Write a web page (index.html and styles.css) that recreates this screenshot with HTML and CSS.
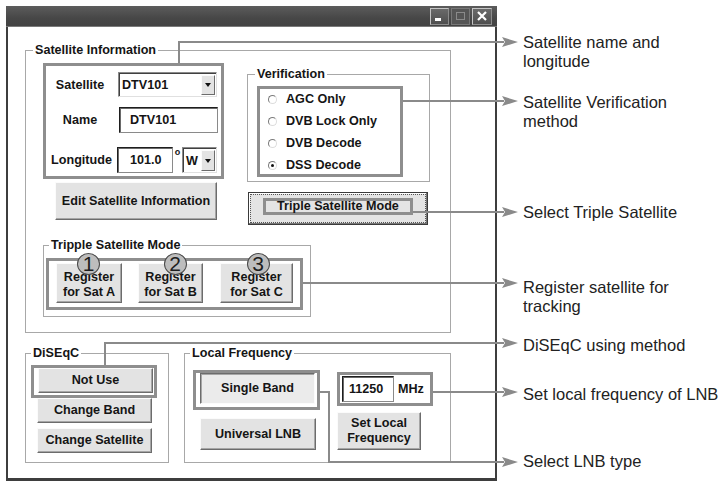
FILE: index.html
```html
<!DOCTYPE html>
<html>
<head>
<meta charset="utf-8">
<link rel="stylesheet" href="styles.css">
</head>
<body>
<div class="stage">
  <div class="window">
    <div class="titlebar">
      <span class="tb-btn tb-min"><svg width="17" height="15" viewBox="0 0 17 15"><rect x="4" y="9" width="6" height="3" fill="#fff"/></svg></span>
      <span class="tb-btn tb-max"><svg width="17" height="15" viewBox="0 0 17 15"><rect x="4.5" y="3.5" width="8" height="7" fill="none" stroke="#8a8a8a"/></svg></span>
      <span class="tb-btn tb-close"><svg width="18" height="15" viewBox="0 0 18 15"><path d="M5 3 L13 11 M13 3 L5 11" stroke="#fff" stroke-width="2.2"/></svg></span>
    </div>
    <div class="client">
      <div class="group sat-group">
        <span class="legend lg-sat">Satellite Information</span>
        <div class="sat-top">
          <div class="sat-left">
            <div class="hl sat-box">
              <div class="sat-row r1">
                <span class="lbl">Satellite</span>
                <div class="select sel-sat"><span class="sel-text">DTV101</span><span class="dd"><i></i></span></div>
              </div>
              <div class="sat-row r2">
                <span class="lbl">Name</span>
                <div class="field f-name">DTV101</div>
              </div>
              <div class="sat-row r3">
                <span class="lbl">Longitude</span>
                <div class="field f-lon">101.0</div>
                <span class="deg">o</span>
                <div class="select sel-w"><span class="sel-text">W</span><span class="dd"><i></i></span></div>
              </div>
            </div>
            <button class="btn edit-btn">Edit Satellite Information</button>
          </div>
          <div class="sat-right">
            <div class="group verif">
              <span class="legend lg-verif">Verification</span>
              <div class="hl verif-box">
                <div class="radio"><span class="rb"></span>AGC Only</div>
                <div class="radio"><span class="rb"></span>DVB Lock Only</div>
                <div class="radio"><span class="rb"></span>DVB Decode</div>
                <div class="radio"><span class="rb on"></span>DSS Decode</div>
              </div>
            </div>
            <div class="triple-btn">
              <div class="focus">
                <div class="hl triple-hl">Triple Satellite Mode</div>
              </div>
            </div>
          </div>
        </div>
        <div class="group tripple">
          <span class="legend lg-tripple">Tripple Satellite Mode</span>
          <div class="hl reg-box">
            <button class="btn reg reg-a">Register<br>for Sat A<span class="badge b1">1</span></button>
            <button class="btn reg reg-b">Register<br>for Sat B<span class="badge b2">2</span></button>
            <button class="btn reg reg-c">Register<br>for Sat C<span class="badge b3">3</span></button>
          </div>
        </div>
      </div>
      <div class="bottom-row">
        <div class="group diseqc">
          <span class="legend lg-diseqc">DiSEqC</span>
          <div class="hl notuse-box"><button class="btn d-btn notuse">Not Use</button></div>
          <button class="btn d-btn d-band">Change Band</button>
          <button class="btn d-btn d-sat">Change Satellite</button>
        </div>
        <div class="group lf">
          <span class="legend lg-lf">Local Frequency</span>
          <div class="lf-left">
            <div class="hl sb-box"><button class="btn pressed sb">Single Band</button></div>
            <button class="btn ulnb">Universal LNB</button>
          </div>
          <div class="lf-right">
            <div class="hl mhz-box"><div class="field f-mhz">11250</div><span class="mhz">MHz</span></div>
            <button class="btn setlf">Set Local<br>Frequency</button>
          </div>
        </div>
      </div>
    </div>
  </div>

  <svg class="callouts" width="720" height="481" viewBox="0 0 720 481">
    <g fill="none" stroke="#8a8a8a" stroke-width="2">
      <path d="M179 63 V42 H504"/>
      <path d="M403 101 H504"/>
      <path d="M413 212 H504"/>
      <path d="M303 283 H504"/>
      <path d="M105 365 V343 H504"/>
      <path d="M433 392 H504"/>
      <path d="M320 392 H329 V462 H504"/>
    </g>
    <g fill="#8a8a8a">
      <polygon points="502,37 518,42 502,47 505,42"/>
      <polygon points="502,96 518,101 502,106 505,101"/>
      <polygon points="502,207 518,212 502,217 505,212"/>
      <polygon points="502,278 518,283 502,288 505,283"/>
      <polygon points="502,338 518,343 502,348 505,343"/>
      <polygon points="502,387 518,392 502,397 505,392"/>
      <polygon points="502,457 518,462 502,467 505,462"/>
    </g>
  </svg>

  <div class="note n1">Satellite name and<br>longitude</div>
  <div class="note n2">Satellite Verification<br>method</div>
  <div class="note n3">Select Triple Satellite</div>
  <div class="note n4">Register satellite for<br>tracking</div>
  <div class="note n5">DiSEqC using method</div>
  <div class="note n6">Set local frequency of LNB</div>
  <div class="note n7">Select LNB type</div>
</div>
</body>
</html>
```

FILE: styles.css
```css
* { box-sizing: border-box; }

body {
  margin: 0;
  background: #fff;
  font-family: "Liberation Sans", Arial, sans-serif;
}

.stage {
  position: relative;
  width: 720px;
  height: 481px;
  overflow: hidden;
}

/* ---------- window ---------- */
.window {
  margin: 6px 0 0 6px;
  width: 491px;
  border-left: 2px solid #3e3e3e;
  border-right: 2px solid #3e3e3e;
  border-bottom: 3px solid #3e3e3e;
  font: bold 12.6px/14px "Liberation Sans", Arial, sans-serif;
  color: #151515;
}

.titlebar {
  height: 21px;
  margin: 0 -2px;
  background: linear-gradient(#5c5c5c, #474747 60%, #434343);
  border-bottom: 1px solid #7a7a7a;
  display: flex;
  justify-content: flex-end;
  align-items: flex-start;
  padding: 2px 5px 0 0;
  gap: 2px;
}

.tb-btn {
  display: block;
  width: 19px;
  height: 17px;
  border: 1px solid #c4c4c4;
  border-right-color: #8c8c8c;
  border-bottom-color: #8c8c8c;
  background: linear-gradient(#6a6a6a, #4e4e4e);
}
.tb-btn svg { display: block; }
.tb-max { border-color: #777; background: #555; }
.tb-close { width: 20px; }

.client {
  height: 451px;
  background: #fff;
  overflow: hidden;
  padding-top: 23px;
}

/* ---------- generic ---------- */
.group {
  position: relative;
  border: 1px solid #a8a8a8;
}

.legend {
  position: absolute;
  top: -8px;
  left: 6px;
  padding: 0 2px;
  background: #fff;
  line-height: 15px;
  white-space: nowrap;
}
.lg-sat, .lg-verif { left: 7px; }
.lg-tripple, .lg-diseqc, .lg-lf { left: 5px; }

.hl {
  border: 3px solid #8e8e8e;
}

.btn {
  display: flex;
  align-items: center;
  justify-content: center;
  text-align: center;
  padding: 0;
  margin: 0;
  font: bold 12.6px/15px "Liberation Sans", Arial, sans-serif;
  color: #151515;
  background: #e3e3e3;
  border: 1px solid;
  border-color: #fbfbfb #6c6c6c #6c6c6c #fbfbfb;
  box-shadow: inset -1px -1px 0 #a6a6a6;
}

.btn.pressed {
  border-color: #6c6c6c #fbfbfb #fbfbfb #6c6c6c;
  box-shadow: inset 1px 1px 0 #a6a6a6;
  background: #ebebeb;
}

.field {
  display: flex;
  align-items: center;
  background: #fff;
  border: 1px solid #1e1e1e;
  border-right-color: #8a8a8a;
  border-bottom-color: #8a8a8a;
  box-shadow: inset 1px 1px 0 #6a6a6a;
  white-space: nowrap;
}

.select {
  display: flex;
  align-items: center;
  background: #fff;
  border: 1px solid #8a8a8a;
  border-right-color: #e0e0e0;
  border-bottom-color: #e0e0e0;
  box-shadow: inset 1px 1px 0 #404040;
  padding: 2px 1px 1px 2px;
}
.sel-text { flex: 1; padding-left: 1px; }
.dd {
  width: 14px;
  height: 100%;
  background: #e3e3e3;
  border: 1px solid;
  border-color: #fbfbfb #6c6c6c #6c6c6c #fbfbfb;
  display: flex;
  align-items: center;
  justify-content: center;
}
.dd i {
  display: block;
  width: 0;
  height: 0;
  border-left: 3.5px solid transparent;
  border-right: 3.5px solid transparent;
  border-top: 4px solid #111;
}

/* ---------- satellite information ---------- */
.sat-group {
  margin-left: 17px;
  width: 426px;
  height: 283px;
}

.sat-top {
  display: flex;
  align-items: flex-start;
  margin: 12px 0 0 17px;
}

.sat-left { width: 181px; }

.sat-box {
  width: 181px;
  height: 116px;
  padding-top: 6px;
}

.sat-row {
  display: flex;
  align-items: center;
}
.sat-row.r1 { height: 25px; }
.sat-row.r2 { height: 26px; margin-top: 10px; }
.sat-row.r3 { height: 26px; margin-top: 14px; }

.lbl {
  width: 68px;
  margin-right: 4px;
  text-align: center;
  white-space: nowrap;
}
.r3 .lbl { padding-left: 3px; }

.sel-sat { width: 99px; height: 25px; }
.f-name { width: 99px; height: 26px; padding-left: 10px; margin-left: 1px; }
.f-lon { width: 56px; height: 26px; padding-left: 12px; margin-left: -1px; }
.deg {
  width: 9px;
  align-self: flex-start;
  font-size: 9px;
  line-height: 9px;
  text-align: center;
  margin-top: 1px;
}
.sel-w { width: 35px; height: 26px; }

.edit-btn {
  width: 162px;
  height: 38px;
  margin: 3px 0 0 12px;
}

.sat-right {
  margin: 11px 0 0 23px;
}

.verif {
  width: 183px;
  height: 108px;
}

.verif-box {
  width: 146px;
  height: 91px;
  margin: 11px 0 0 9px;
  padding-top: 0;
}

.radio {
  display: flex;
  align-items: center;
  height: 22px;
  margin-top: -1px;
  margin-bottom: 1px;
  padding-left: 8px;
  white-space: nowrap;
}
.rb {
  position: relative;
  width: 9px;
  height: 9px;
  border-radius: 50%;
  border: 1px solid;
  border-color: #7a7a7a #dcdcdc #dcdcdc #7a7a7a;
  margin-right: 9px;
  background: #fff;
}
.rb.on::after {
  content: "";
  position: absolute;
  left: 2px;
  top: 2px;
  width: 3px;
  height: 3px;
  border-radius: 50%;
  background: #111;
}

.triple-btn {
  width: 180px;
  height: 33px;
  margin: 10px 0 0 1px;
  border: 1px solid #3a3a3a;
  background: #e4e4e4;
  box-shadow: inset -1px -1px 0 #777, inset 1px 1px 0 #fff;
  padding: 1px;
}
.triple-btn .focus {
  height: 100%;
  border: 1px dotted #555;
  display: flex;
  justify-content: center;
  align-items: flex-start;
}
.triple-hl {
  width: 150px;
  height: 17px;
  margin-top: 3px;
  line-height: 11px;
  text-align: center;
  white-space: nowrap;
}

/* ---------- tripple satellite mode ---------- */
.tripple {
  width: 268px;
  height: 72px;
  margin: 20px 0 0 17px;
}

.reg-box {
  width: 257px;
  height: 52px;
  margin: 12px 0 0 2px;
  display: flex;
  align-items: flex-start;
  padding: 2px 0 0 7px;
}

.reg {
  position: relative;
  height: 40px;
  padding-top: 3px;
  line-height: 15px;
}
.reg-a { width: 66px; }
.reg-b { width: 65px; margin-left: 16px; }
.reg-c { width: 73px; margin-left: 17px; }

.badge {
  position: absolute;
  top: -11px;
  left: 50%;
  width: 23px;
  height: 22px;
  margin-left: -12px;
  border-radius: 50%;
  background: #bdbdbd;
  border: 1.5px solid #4a4a4a;
  font: 21px/19px "Liberation Sans", Arial, sans-serif;
  color: #1e1e1e;
  text-align: center;
}
.b1 { margin-left: -12px; }
.b2 { margin-left: -7px; }
.b3 { margin-left: -10px; }

/* ---------- bottom row ---------- */
.bottom-row {
  display: flex;
  align-items: flex-start;
  margin: 20px 0 0 17px;
}

.diseqc {
  width: 144px;
  height: 110px;
}

.notuse-box {
  width: 126px;
  height: 33px;
  margin: 11px 0 0 5px;
  padding-left: 4px;
}

.d-btn {
  width: 115px;
  height: 25px;
}
.d-band { margin-left: 11px; }
.d-sat { margin: 5px 0 0 11px; }

.lf {
  display: flex;
  align-items: flex-start;
  width: 267px;
  height: 110px;
  margin-left: 15px;
}

.lf-left { margin: 16px 0 0 8px; }

.sb-box {
  width: 127px;
  height: 40px;
  padding-left: 4px;
}
.sb { width: 115px; height: 31px; }

.ulnb {
  width: 116px;
  height: 32px;
  margin: 8px 0 0 7px;
}

.lf-right { margin: 18px 0 0 17px; }

.mhz-box {
  width: 96px;
  height: 34px;
  display: flex;
  align-items: center;
  padding-left: 2px;
}
.f-mhz {
  width: 52px;
  height: 26px;
  padding-left: 6px;
}
.mhz { margin-left: 4px; }

.setlf {
  width: 84px;
  height: 38px;
  margin-top: 6px;
}

/* ---------- callouts ---------- */
.callouts {
  position: absolute;
  left: 0;
  top: 0;
  pointer-events: none;
}

.note {
  position: absolute;
  left: 523px;
  font: 16.5px/18.5px "Liberation Sans", Arial, sans-serif;
  color: #222;
  white-space: nowrap;
}
.n1 { top: 33px; }
.n2 { top: 93px; }
.n3 { top: 203px; }
.n4 { top: 278px; }
.n5 { top: 336px; }
.n6 { top: 385px; }
.n7 { top: 452px; }
```
